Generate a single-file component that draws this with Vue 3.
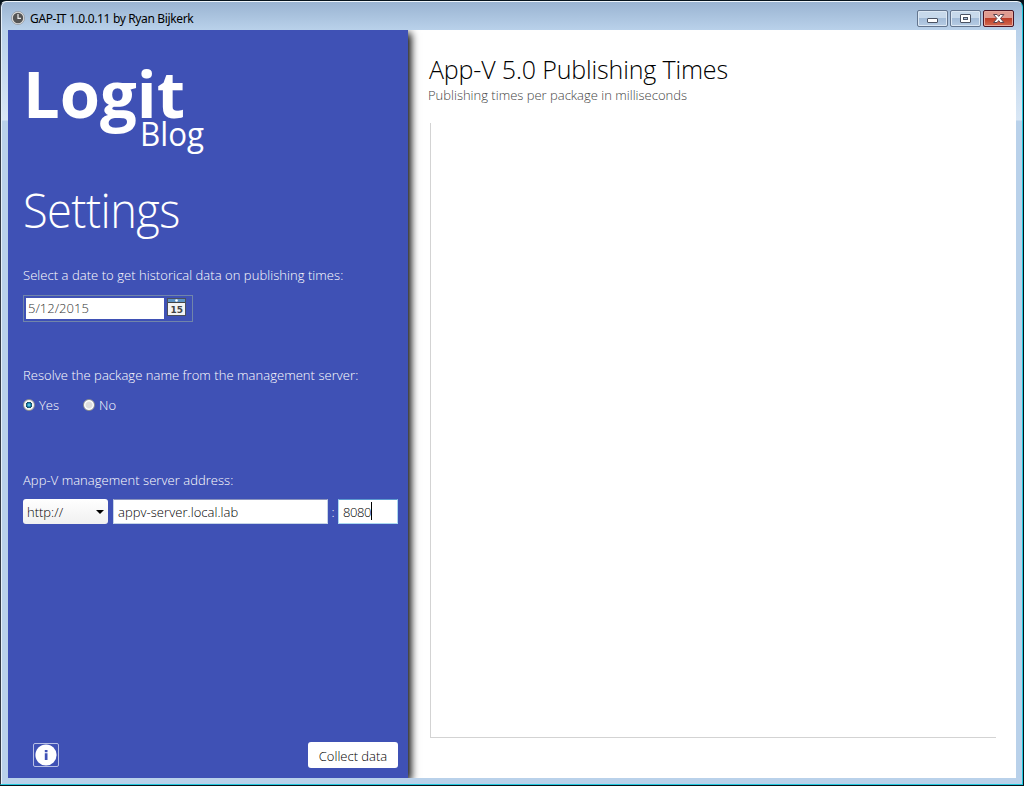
<script setup>
import { ref } from 'vue'
const date = ref('5/12/2015')
const resolve = ref('yes')
const host = ref('appv-server.local.lab')
const port = ref('8080')
</script>

<template>
  <div class="desktop">
    <div class="window">
      <header class="titlebar">
        <svg class="clock" viewBox="0 0 14 14">
          <circle cx="7" cy="7" r="6.6" fill="#dedede" stroke="#8d949c" stroke-width=".7" />
          <circle cx="7" cy="7" r="5.2" fill="#555" />
          <path d="M7 3v4.3h3" fill="none" stroke="#eee" stroke-width="1.2" />
        </svg>
        <span class="caption">GAP-IT 1.0.0.11 by Ryan Bijkerk</span>
        <div class="controls">
          <button class="ctl">
            <svg viewBox="0 0 29 16"><rect x="9.5" y="8.5" width="10" height="4" rx=".5" fill="#fff" stroke="#4a5262" /></svg>
          </button>
          <button class="ctl">
            <svg viewBox="0 0 29 16"><rect x="9.5" y="4.5" width="10" height="8" rx=".5" fill="#fff" stroke="#4a5262" /><rect x="12.5" y="7.5" width="4" height="2" fill="#a9bfd8" stroke="#4a5262" /></svg>
          </button>
          <button class="ctl close">
            <svg viewBox="0 0 29 16"><path d="M9.5 4.5h3.6l1.6 1.9 1.6-1.9h3.6l-3.4 4 3.4 4h-3.6l-1.6-1.9-1.6 1.9H9.5l3.4-4z" fill="#fff" stroke="#5b4550" /></svg>
          </button>
        </div>
      </header>
      <div class="client">
        <aside class="panel">
          <svg class="logo" viewBox="0 0 190 100" width="190" height="100">
            <text class="logo-main" x="0" y="62" textLength="162" lengthAdjust="spacingAndGlyphs">Logit</text>
            <text class="logo-sub" x="117" y="89.5" textLength="64" lengthAdjust="spacingAndGlyphs">Blog</text>
          </svg>
          <h1><span>Settings</span></h1>
          <p class="label l1">Select a date to get historical data on publishing times:</p>
          <div class="date">
            <div class="date-value">{{ date }}</div>
            <svg class="cal" viewBox="0 0 20 18">
              <rect x=".5" y=".5" width="18" height="17" fill="#f3f3f3" stroke="#4a4f5c" />
              <rect x="1" y="1" width="17" height="3" fill="#5d92c4" />
              <path d="M1 4.5h17" stroke="#444" />
              <circle cx="9.5" cy="2.5" r="1.3" fill="#fff" />
              <text x="3.5" y="14.5" class="cal-num" textLength="12.5" lengthAdjust="spacingAndGlyphs">15</text>
            </svg>
          </div>
          <p class="label l2">Resolve the package name from the management server:</p>
          <div class="radios">
            <div class="radio" @click="resolve = 'yes'"><i :class="{ on: resolve === 'yes' }"></i><span>Yes</span></div>
            <div class="radio" @click="resolve = 'no'"><i :class="{ on: resolve === 'no' }"></i><span>No</span></div>
          </div>
          <p class="label l3">App-V management server address:</p>
          <div class="address">
            <div class="combo"><span>http://</span><svg viewBox="0 0 8 4"><path d="M0 0h8L4 4z" /></svg></div>
            <div class="box host"><span>{{ host }}</span></div>
            <span class="colon">:</span>
            <div class="box port"><span>{{ port }}</span><b></b></div>
          </div>
          <footer>
            <button class="info">
              <svg viewBox="0 0 22 22"><circle cx="11" cy="11" r="10.6" fill="#fff" /><path d="M9.8 6h2.7v2.2H9.8zM9.8 9.3h2.7V16H9.8z" fill="#3f51b5" /></svg>
            </button>
            <button class="collect"><span>Collect data</span></button>
          </footer>
        </aside>
        <main>
          <h2>App-V 5.0 Publishing Times</h2>
          <p class="sub">Publishing times per package in milliseconds</p>
          <div class="chart"></div>
        </main>
      </div>
    </div>
  </div>
</template>

<style>
body { margin: 0; overflow: hidden; }
</style>
<style scoped>
* { box-sizing: border-box; }
h1, h2, p { margin: 0; font-weight: 300; white-space: nowrap; }
button { padding: 0; font: inherit; }
.desktop { width: 1024px; height: 786px; background: #06131c; padding: 1px 1px 1px 0; font: 300 13px/18px "Open Sans", sans-serif; }
.window { height: 784px; border: 1px solid #20c8dd; border-top-color: #eef5fb; border-left-color: #333b45; border-radius: 6px 6px 0 0; background: linear-gradient(#9ab4d2, #b9d1ea 28px, #d9e7f5 118px, #b9d1ea 119px); padding: 0 6px 0 7px; box-shadow: inset 1px 0 #e6f0fa; }
.titlebar { height: 28px; display: flex; align-items: flex-start; padding-left: 3px; }
.clock { width: 14px; height: 14px; margin-top: 9px; }
.caption { margin: 8px 0 0 5px; font: 400 12px/18px "Noto Sans", sans-serif; letter-spacing: -.35px; color: #000; white-space: nowrap; }
.controls { display: flex; gap: 2px; margin: 8px 2px 0 auto; }
.ctl { width: 31px; height: 17px; border: 1px solid #63758e; border-radius: 2px; background: linear-gradient(#c7d9eb 48%, #a3bcd8 50%, #b6cce4); box-shadow: inset 0 0 0 1px #dce8f4; }
.ctl svg { display: block; width: 29px; height: 16px; margin-top: -1px; }
.close { border-color: #4b1424; background: linear-gradient(#e09b90 45%, #bd3d28 50%, #d36a50); box-shadow: inset 0 0 0 1px #e7a99e; }
.client { height: 748px; display: flex; background: #fff; }
.panel { position: relative; width: 400px; height: 748px; background: #3f51b5; color: #fff; padding: 26px 10px 0 15px; box-shadow: 3px 3px 8px 0 #000; clip-path: inset(0 -24px 0 0); display: flex; flex-direction: column; }
.logo { display: block; overflow: visible; }
.logo text { fill: #fff; font-family: "Open Sans", sans-serif; }
.logo-main { font-size: 65px; font-weight: 700; }
.logo-sub { font-size: 32px; font-weight: 400; }
h1 { margin-top: 21px; font-size: 48px; line-height: 66px; letter-spacing: -.6px; }
h1 span { display: inline-block; transform: scaleX(.942); transform-origin: 0 50%; }
.label { height: 18px; font-weight: 330; letter-spacing: .05px; }
.l1 { margin-top: 23px; }
.date { width: 170px; height: 27px; margin-top: 11px; border: 1px solid #7185aa; padding: 2px; display: flex; }
.date-value { width: 138px; height: 21px; background: #fff; color: #333; padding-left: 2px; line-height: 21px; }
.cal { width: 20px; height: 18px; margin-left: 3px; }
.cal-num { font: 700 9px "DejaVu Sans", sans-serif; fill: #444; }
.l2 { margin-top: 44px; }
.radios { display: flex; margin-top: 12px; height: 18px; }
.radio { width: 60px; display: flex; gap: 4px; }
.radio i { width: 12px; height: 12px; margin-top: 2.5px; border-radius: 50%; border: 1px solid #8e8f8f; background: radial-gradient(#ddd 40%, #fff 60%); }
.radio i.on { background: radial-gradient(circle at 50% 50%, #8be0f5 0, #1688b4 25%, #163f5a 43%, #f4f4f4 50%); }
.l3 { margin-top: 57px; }
.address { display: flex; margin-top: 10px; height: 25px; line-height: 25px; color: #000; }
.combo { width: 85px; display: flex; align-items: center; justify-content: space-between; padding: 1px 4px 0; background: linear-gradient(#fff, #f0f0f0); border-radius: 3px; }
.combo svg { width: 8px; height: 4px; }
.box { flex: none; background: #fff; border: 1px solid #c5d4e6; border-top-color: #8b94bd; padding-left: 4px; line-height: 24px; }
.host { width: 215px; margin-left: 5px; letter-spacing: .05px; }
.colon { width: 10px; color: #fff; text-align: center; line-height: 26px; }
.port { width: 60px; margin-left: auto; border-color: #a9d8f0; border-top-color: #5b98cf; display: flex; letter-spacing: -.4px; }
.port b { width: 1px; height: 18px; margin-top: 2px; background: #000; }
footer { display: flex; justify-content: space-between; margin: auto 0 10px 10px; }
.info { width: 26px; height: 24px; margin-top: 1px; background: none; border: 1px solid #b8c0e6; border-radius: 2px; }
.info svg { display: block; width: 22px; height: 22px; margin: 0 1px; }
.collect { width: 90px; height: 26px; border: 0; border-radius: 3px; background: #fff; color: #000; line-height: 28px; white-space: nowrap; }
main { flex: 1; padding: 21px 20px 0 20px; }
h2 { margin-left: 1px; font-size: 25px; line-height: 36px; letter-spacing: -.15px; color: #000; }
.sub { color: #444; line-height: 16px; }
.chart { height: 615px; margin: 20px 0 0 2px; width: 566px; border-left: 1px solid #d3d3d3; border-bottom: 1px solid #d3d3d3; }
</style>
